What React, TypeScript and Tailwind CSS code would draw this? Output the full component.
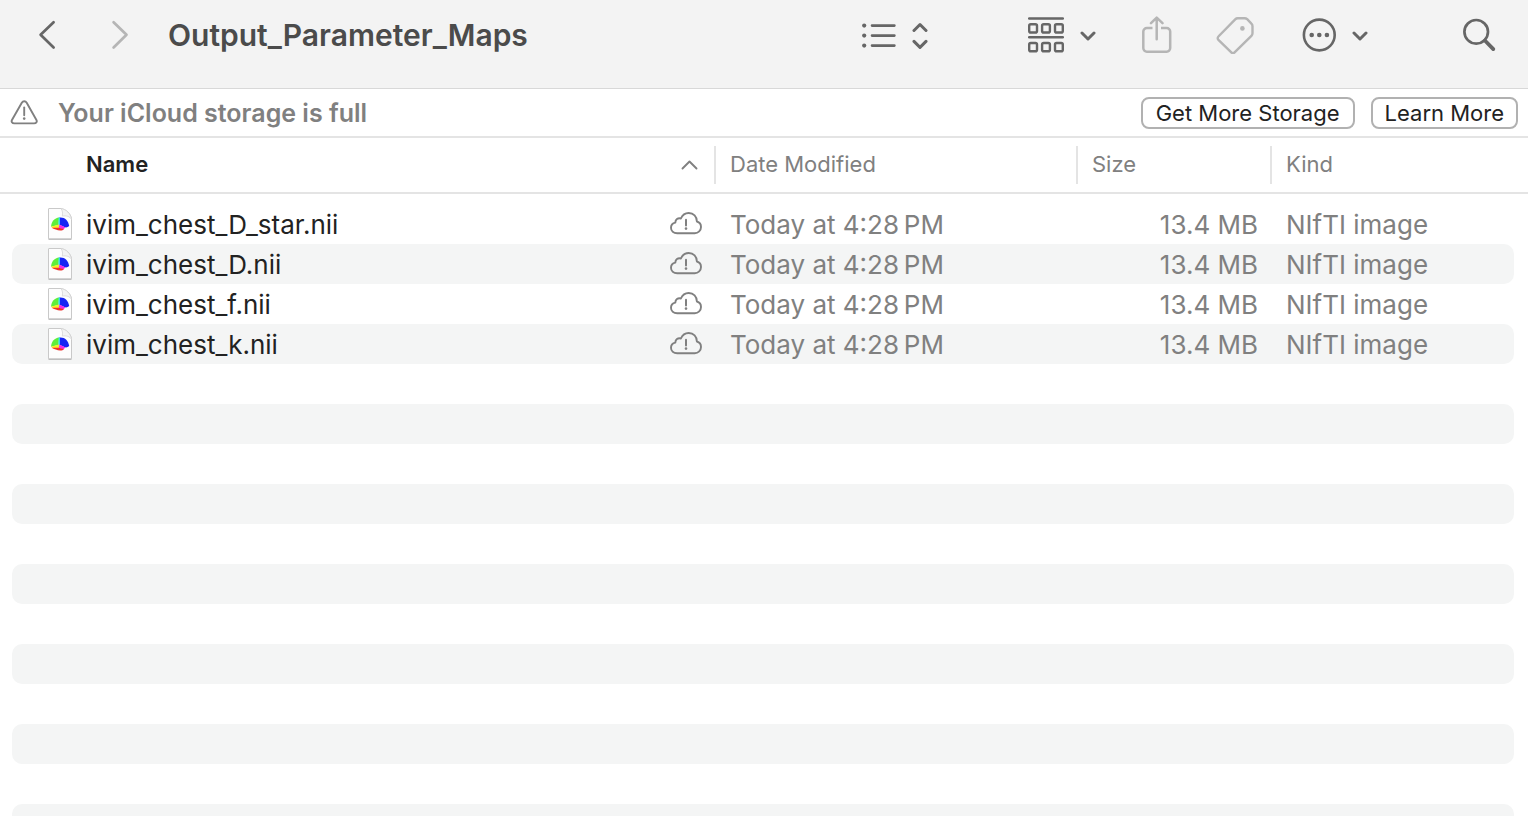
import type { ReactNode } from "react";

const files = [
  "ivim_chest_D_star.nii",
  "ivim_chest_D.nii",
  "ivim_chest_f.nii",
  "ivim_chest_k.nii",
];

const stripes = Array.from({ length: 24 }, (_, i) => i);

function Chevron({ forward = false }: { forward?: boolean }) {
  return (
    <svg width="18" height="30" viewBox="0 0 18 30" fill="none" stroke="currentColor" strokeWidth="2.7" strokeLinecap="round" strokeLinejoin="round" aria-hidden="true">
      <path d={forward ? "M2.600 2.200 15.500 14.800 2.600 27.500" : "M15.600 2.200 2.600 14.800l13 12.700"} />
    </svg>
  );
}

function DownChevron() {
  return (
    <svg width="16" height="12" viewBox="0 0 16 12" fill="none" stroke="currentColor" strokeWidth="3" strokeLinecap="round" strokeLinejoin="round" aria-hidden="true">
      <path d="M2 4l6 6 6-6" />
    </svg>
  );
}

function ListIcon() {
  return (
    <svg width="34" height="26" viewBox="0 0 34 26" aria-hidden="true">
      <g fill="currentColor">
        <circle cx="2.2" cy="3.6" r="2.1" />
        <circle cx="2.2" cy="13.6" r="2.1" />
        <circle cx="2.2" cy="23.6" r="2.1" />
      </g>
      <path d="M11.400 3.600h22.400M11.400 13.600h22.400M11.400 23.600h22.400" transform="translate(-1.400 0)" stroke="currentColor" strokeWidth="2.6" strokeLinecap="round" />
    </svg>
  );
}

function UpDownIcon() {
  return (
    <svg width="16" height="28" viewBox="0 0 16 28" fill="none" stroke="currentColor" strokeWidth="3" strokeLinecap="round" strokeLinejoin="round" aria-hidden="true">
      <path d="M2 9.500l6-6 6 6M2 20.400l6 6 6-6" />
    </svg>
  );
}

function GroupIcon() {
  return (
    <svg width="36" height="36" viewBox="0 0 36 36" fill="none" stroke="currentColor" aria-hidden="true">
      <path d="M1.2 1.5h33.6M1.2 20.3h33.6" strokeWidth="2.5" strokeLinecap="round" />
      <g strokeWidth="2.4">
        <rect x="1.2" y="7.2" width="7.8" height="8.3" rx="1.6" />
        <rect x="14.1" y="7.2" width="7.8" height="8.3" rx="1.6" />
        <rect x="27" y="7.2" width="7.8" height="8.3" rx="1.6" />
        <rect x="1.2" y="26" width="7.8" height="8.3" rx="1.6" />
        <rect x="14.1" y="26" width="7.8" height="8.3" rx="1.6" />
        <rect x="27" y="26" width="7.8" height="8.3" rx="1.6" />
      </g>
    </svg>
  );
}

function ShareIcon() {
  return (
    <svg width="30" height="38" viewBox="0 0 30 38" fill="none" stroke="currentColor" strokeWidth="2.5" strokeLinecap="round" strokeLinejoin="round" aria-hidden="true">
      <path d="M10.5 12H5a3.6 3.6 0 0 0-3.7 3.700v16.300A3.6 3.6 0 0 0 5 35.700h19.500a3.6 3.6 0 0 0 3.700-3.700V15.700a3.6 3.6 0 0 0-3.700-3.700H19" strokeLinecap="butt" />
      <path d="M14.700 23.200V2M9 7.200l5.700-5.600 5.800 5.600" />
    </svg>
  );
}

function TagIcon() {
  return (
    <svg width="38" height="38" viewBox="0 0 38 38" fill="none" aria-hidden="true">
      <path d="M21.8 2.200h6.900c1 0 1.800.4 2.500 1l4.200 4.400c.8.8 1.100 1.600 1.100 2.600v7.100c0 1-.4 1.900-1.100 2.600L18.600 36.400a2.300 2.300 0 0 1-3.300 0L2.400 23.800a2.300 2.300 0 0 1 0-3.300L19.200 3.300c.7-.7 1.600-1.100 2.600-1.100z" stroke="currentColor" strokeWidth="2.400" />
      <circle cx="26.400" cy="12.400" r="2.300" fill="currentColor" />
    </svg>
  );
}

function MoreIcon() {
  return (
    <svg width="34" height="34" viewBox="0 0 34 34" fill="none" aria-hidden="true">
      <circle cx="17.3" cy="17" r="15.4" stroke="currentColor" strokeWidth="2.600" />
      <g fill="currentColor">
        <circle cx="9.700" cy="17" r="2.300" />
        <circle cx="17.300" cy="17" r="2.300" />
        <circle cx="24.900" cy="17" r="2.300" />
      </g>
    </svg>
  );
}

function SearchIcon() {
  return (
    <svg width="34" height="34" viewBox="0 0 34 34" fill="none" stroke="currentColor" aria-hidden="true">
      <circle cx="14.200" cy="13.800" r="11.800" strokeWidth="2.700" />
      <path d="M22.900 22.500l8.400 8.600" strokeWidth="3.800" strokeLinecap="round" />
    </svg>
  );
}

function WarningIcon() {
  return (
    <svg width="28" height="26" viewBox="0 0 28 26" fill="none" stroke="currentColor" aria-hidden="true">
      <path d="M11.800 2.700c1.200-2 3.700-2 4.900 0l9.600 17c1.200 2.100 0 3.700-2.200 3.700H4.300c-2.200 0-3.400-1.600-2.200-3.700z" strokeWidth="1.900" />
      <path d="M14.200 7.500v7.700" strokeWidth="1.900" strokeLinecap="round" />
      <circle cx="14.200" cy="18.600" r="1.300" fill="currentColor" stroke="none" />
    </svg>
  );
}

function CloudIcon() {
  return (
    <svg width="32" height="24" viewBox="0 0 32 24" fill="none" stroke="currentColor" role="img" aria-label="Not uploaded">
      <path d="M7.200 21.200c-3.600 0-6.200-2.200-6.200-5.400 0-2.800 1.700-4.700 4.300-5.200.1-3.200 2.500-4.900 5.600-4.100C12.400 3 15.100 1 18.700 1c4.800 0 8.200 3.600 8.200 8.500 2.500.7 4.100 2.900 4.100 5.500 0 3.500-2.700 6.200-6.300 6.200z" strokeWidth="1.900" strokeLinejoin="round" />
      <path d="M16 7.800v5.600" strokeWidth="2" strokeLinecap="round" />
      <circle cx="16" cy="16.600" r="1.300" fill="currentColor" stroke="none" />
    </svg>
  );
}

function FileIcon() {
  return (
    <svg width="28" height="34" viewBox="0 0 28 34" fill="none" aria-hidden="true">
      <path d="M3 1.500h12c5.500 1 9.500 5 10.500 10v20a.5.5 0 0 1-.5.500H3a.5.5 0 0 1-.5-.5V2a.5.500 0 0 1 .5-.5z" fill="#fdfdfd" stroke="#c9c9c9" />
      <path d="M2.500 32.200h23" stroke="#b0b0b0" />
      <path d="M15 1.500c1.500 2.300 1.900 4.500 1.300 7.500 4-.5 7.700.3 9.200 3.500C24.500 6.500 20.500 2.500 15 1.500z" fill="#f4f4f4" stroke="#d6d6d6" strokeWidth=".8" />
      <path d="M13 10.500C8.500 11 5.500 14.300 5 19.700l7.500-1.700z" fill="#5df03a" />
      <path d="M13.300 10.500c5-.8 8.900 2.500 9.900 8.500-1.500 1.500-3.200 1.700-5 1l-4.900-2.200z" fill="#1524f4" />
      <path d="M12.700 10.600h1.300v7.600l-1.600.2z" fill="#27d9f0" />
      <path d="M5 19.800l7.900-2.200.8 3.300-5 1.300z" fill="#f7ed24" />
      <path d="M13.400 17.600l6.200 3-2.200 1.600-4.800-.9z" fill="#f12de5" />
      <path d="M5.500 20.800l7 0 5.500 1.200c-.9 1.100-2.300 1.600-3.900 1.500-2.900-.1-5.700-1.300-8.600-2.700z" fill="#ef302a" />
    </svg>
  );
}

function ToolButton({ label, className = "", disabled = false, children }: { label: string; className?: string; disabled?: boolean; children: ReactNode }) {
  return (
    <button type="button" aria-label={label} disabled={disabled} className={`flex shrink-0 items-center gap-4 ${disabled ? "text-[#b5b5b5]" : "text-[#666666]"} ${className}`}>
      {children}
    </button>
  );
}

function HeaderCell({ children }: { children: ReactNode }) {
  return (
    <th scope="col" className="border-b-2 border-[#e4e4e4] p-0 text-left font-normal">
      <div className="flex h-[38px] items-center border-l-2 border-[#e4e4e4] pb-0.5 pl-3.5">{children}</div>
    </th>
  );
}

export default function App() {
  return (
    <main className="flex h-screen flex-col overflow-hidden bg-white font-['Inter','Liberation_Sans',sans-serif] text-[#808080]">
      <header className="flex h-[89px] shrink-0 items-start border-b border-[#d8d8d8] bg-[#f3f3f3] pr-8 pl-[38px]">
        <div className="flex h-[70px] items-center">
          <ToolButton label="Back"><Chevron /></ToolButton>
          <ToolButton label="Forward" disabled className="ml-[55px]"><Chevron forward /></ToolButton>
          <h1 className="ml-[39px] text-[30px] leading-9 font-semibold text-[#4b4b4b]">Output_Parameter_Maps</h1>
        </div>
        <div className="ml-auto flex h-[70px] items-center">
          <ToolButton label="View as list"><ListIcon /><UpDownIcon /></ToolButton>
          <ToolButton label="Group items" className="ml-[100px]"><GroupIcon /><DownChevron /></ToolButton>
          <ToolButton label="Share" disabled className="ml-[46px]"><ShareIcon /></ToolButton>
          <ToolButton label="Edit tags" disabled className="ml-11"><TagIcon /></ToolButton>
          <ToolButton label="More actions" className="ml-12"><MoreIcon /><DownChevron /></ToolButton>
          <ToolButton label="Search" className="ml-[94px]"><SearchIcon /></ToolButton>
        </div>
      </header>

      <section className="flex h-[49px] shrink-0 items-center border-b-2 border-[#e4e4e4] px-2.5">
        <WarningIcon />
        <p className="ml-5 text-[25px] leading-8 font-semibold">Your iCloud storage is full</p>
        <div className="ml-auto flex gap-4 text-[22px] leading-7 text-[#222222]">
          <button type="button" className="h-8 rounded-lg border-2 border-[#b1b1b1] px-[13px]">Get More Storage</button>
          <button type="button" className="h-8 rounded-lg border-2 border-[#b1b1b1] px-3">Learn More</button>
        </div>
      </section>

      <table className="w-full shrink-0 table-fixed border-separate border-spacing-0">
        <colgroup>
          <col />
          <col className="w-[362px]" />
          <col className="w-[194px]" />
          <col className="w-[258px]" />
        </colgroup>
        <thead className="text-[22px] leading-7">
          <tr className="h-14">
            <th scope="col" aria-sort="ascending" className="border-b-2 border-[#e4e4e4] p-0 text-left">
              <div className="flex h-[38px] items-center justify-between pr-4 pb-0.5 pl-[86px]">
                <span className="font-semibold text-[#222222]">Name</span>
                <svg width="18" height="12" viewBox="0 0 18 12" fill="none" stroke="currentColor" strokeWidth="1.900" strokeLinecap="round" strokeLinejoin="round" aria-hidden="true">
                  <path d="M2.500 10.500L9.500 3.500l7 7" />
                </svg>
              </div>
            </th>
            <HeaderCell>Date Modified</HeaderCell>
            <HeaderCell>Size</HeaderCell>
            <HeaderCell>Kind</HeaderCell>
          </tr>
        </thead>
        <tbody className="text-[26px] leading-[42px] before:block before:h-2.5">
          {files.map((name, i) => {
            const fill = i % 2 === 1 ? "bg-[#f4f5f5]" : "bg-white";
            return (
              <tr key={name} className="whitespace-nowrap">
                <td className="p-0 pl-3">
                  <div className={`flex h-10 items-center rounded-l-[10px] pr-3 pl-[34px] ${fill}`}>
                    <FileIcon />
                    <span className="ml-3 h-10 text-[#222222]">{name}</span>
                    <span className="ml-auto"><CloudIcon /></span>
                  </div>
                </td>
                <td className="p-0"><div className={`h-10 pl-4 ${fill}`}>Today at 4:28&#8239;PM</div></td>
                <td className="p-0"><div className={`h-10 pr-3 text-right ${fill}`}>13.4 MB</div></td>
                <td className="p-0 pr-3.5"><div className={`h-10 rounded-r-[10px] pl-4 ${fill}`}>NIfTI image</div></td>
              </tr>
            );
          })}
        </tbody>
      </table>

      <div className="flex min-h-0 flex-1 flex-col gap-10 overflow-hidden pt-10 pr-3.5 pl-3" aria-hidden="true">
        {stripes.map((i) => (
          <div key={i} className="h-10 shrink-0 rounded-[10px] bg-[#f4f5f5]" />
        ))}
      </div>
    </main>
  );
}
